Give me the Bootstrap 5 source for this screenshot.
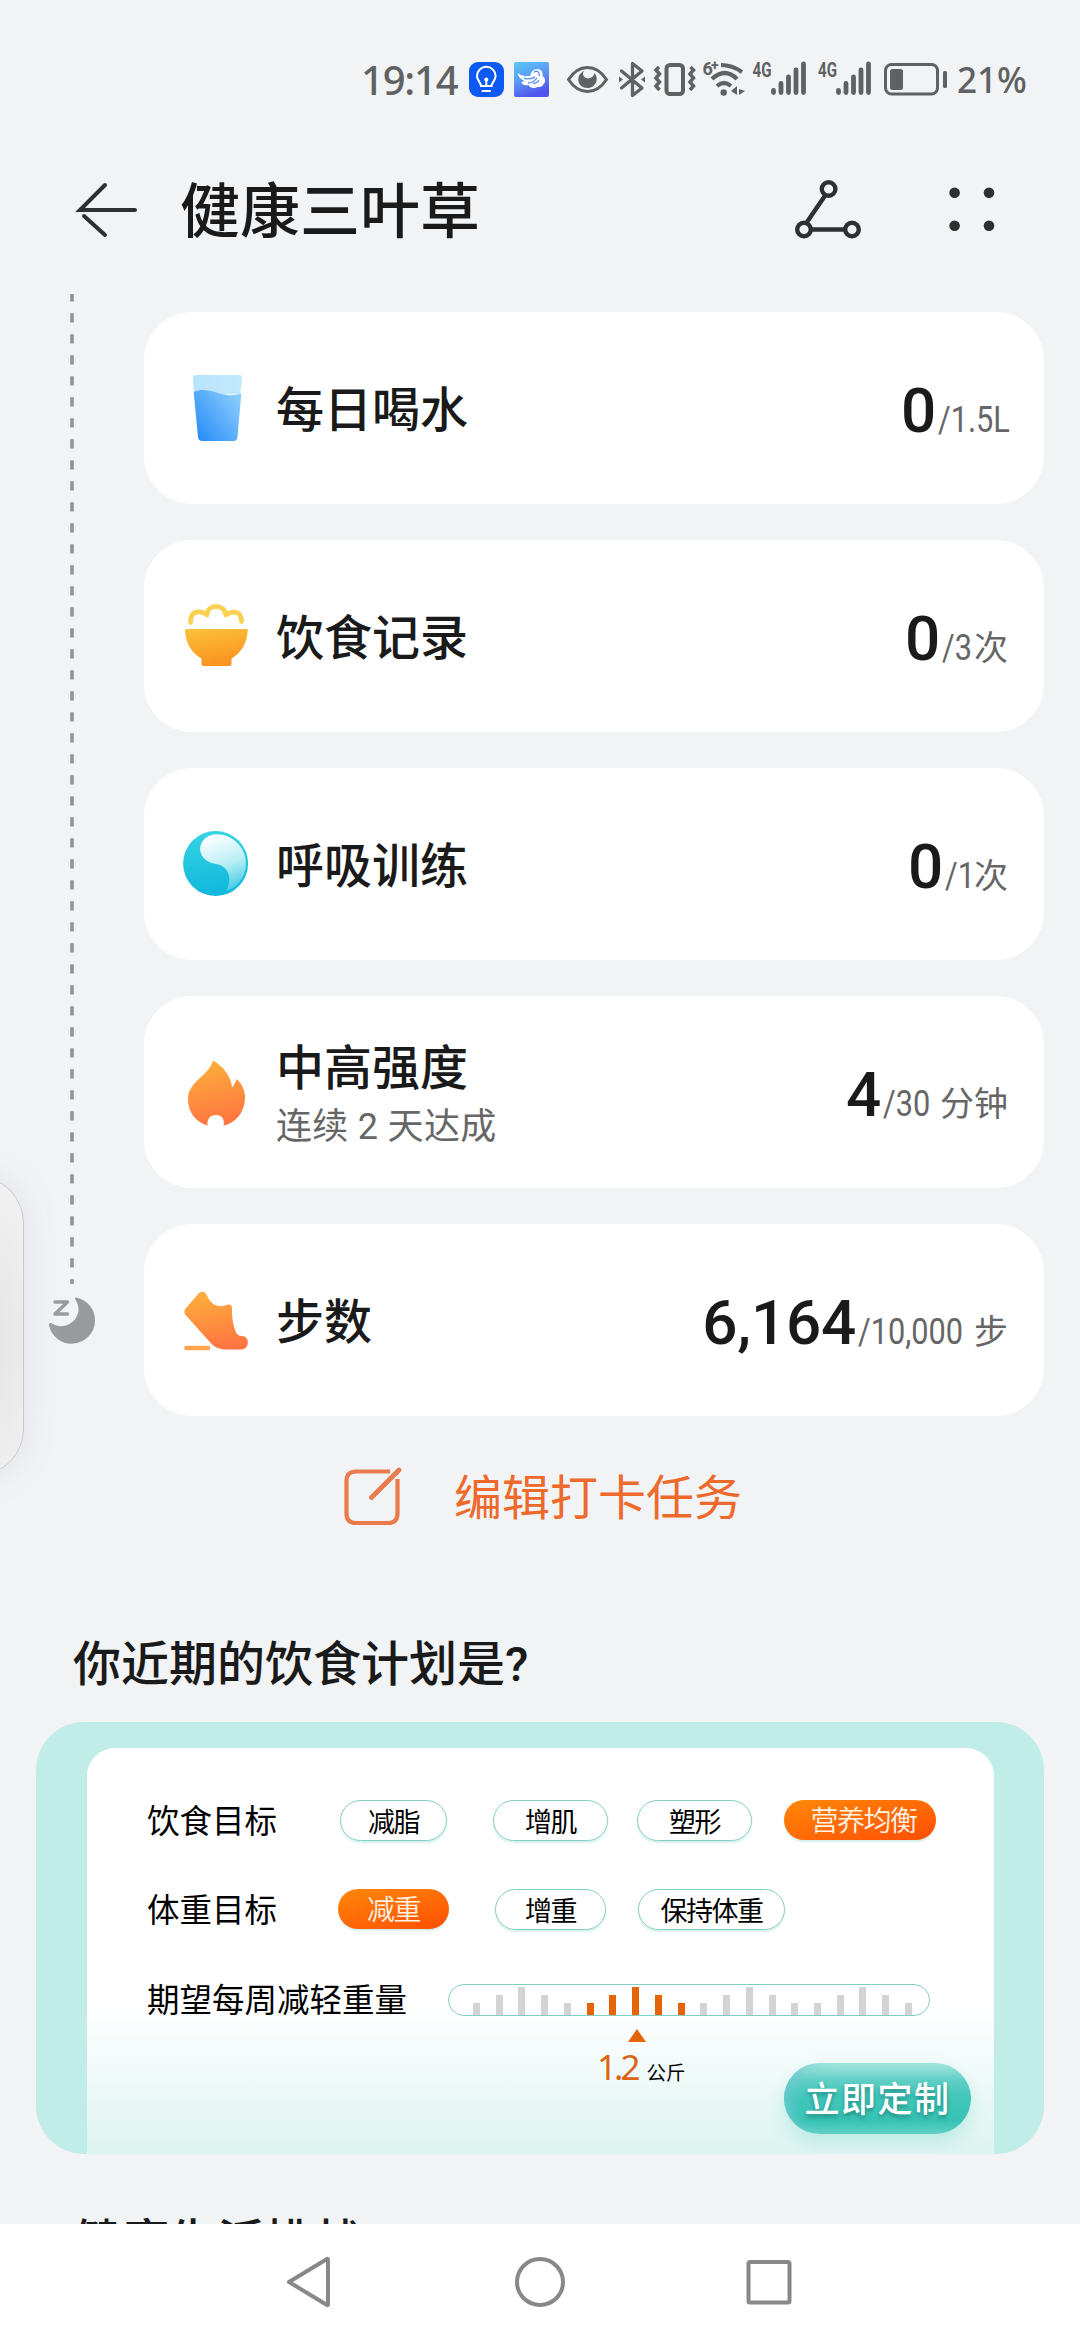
<!DOCTYPE html>
<html lang="zh-CN">
<head>
<meta charset="utf-8">
<meta name="viewport" content="width=device-width, initial-scale=1">
<title>健康三叶草</title>
<link href="https://cdn.jsdelivr.net/npm/bootstrap@5.3.0/dist/css/bootstrap.min.css" rel="stylesheet">
<style>
body{width:1080px;height:2340px;overflow:hidden;background:#f1f3f5;color:#1a1a1a;font-family:Roboto,"Noto Sans CJK SC",sans-serif;line-height:1}
svg{display:block;flex:none}
.status{height:120px;padding-left:361px;color:#606163}
.status-txt{font-family:"Noto Sans",sans-serif;font-size:40px;line-height:40px;white-space:nowrap;margin-top:60px;font-weight:500}
.clock{width:99px;letter-spacing:-1.2px}
.topbar{height:174px;padding:54px 0 0 72px}
.topbar h1{font-size:60px;line-height:72px;font-weight:500;width:646px;padding:3px 0 0 36px}
.viewport{height:1930px}
.rail{width:144px}
.tasks{width:900px;padding-top:18px;gap:36px}
.task{height:192px;border:0;border-radius:48px;padding:0 36px;background:#fff;color:#1a1a1a}
.task-name{font-size:48px;line-height:56px;font-weight:500;margin-left:24px;padding-top:6px}
.task-sub{font-size:36px;line-height:44px;font-weight:400;color:#666;margin-top:8px;letter-spacing:.3px}
.big{font-size:62px;font-weight:500;letter-spacing:-.2px;color:#1a1a1a}
.goal{font-size:37px;color:#666;font-weight:400;line-height:64px;padding-top:15px}
.squeeze{display:inline-block;transform:scaleX(.83);transform-origin:0 50%;white-space:nowrap;margin-left:2px}
.sq-l{width:70px}.sq-1{width:29px}.sq-2{width:32px}.sq-3{width:57px}.sq-4{width:116px}
.unit{font-size:34px;font-family:"Noto Sans CJK SC",sans-serif}
.edit{height:162px;padding-left:344px;color:#ee6a2c;gap:50px;font-size:48px}
.edit span{padding-top:4px}
.sec-title{font-size:48px;line-height:56px;font-weight:500;padding-left:73px}
.plan-title{padding-top:59px;height:144px}
.next-title{padding-top:61px}
.promo{width:1008px;height:432px;margin-left:36px;border-radius:48px;background:#c0ede7;padding:26px 50px 0 51px;overflow:hidden}
.sheet{height:406px;border-radius:28px 28px 0 0;background:linear-gradient(#fff 0,#fff 64%,#ddf4f1 100%);color:#000;font-family:"Noto Sans CJK SC",sans-serif;padding:52px 0 0 60px}
.line{height:42px;margin-bottom:47px}
.lbl{font-size:32.5px;line-height:42px;white-space:nowrap;width:193px;margin-top:-2px}
.lbl-long{width:301px}
.pill{height:41px;border:1.5px solid #84cdc4;border-radius:21px;font-size:27px;letter-spacing:-1.5px;line-height:39px;white-space:nowrap;box-shadow:0 2px 2px #d4f0ec;color:#000}
.pill.hot{border:0;color:#fff3e6;background:linear-gradient(165deg,#ff8208 10%,#ff4e04);height:40px;font-size:28px;font-weight:350}
.p-a{width:107px}.p-b{width:115px;margin-left:46px}.p-c{width:115px;margin-left:29px}.p-d{width:152px;margin-left:32px;padding-left:7px}
.q-a{width:111px;margin-left:-2px}.q-b{width:111px;margin-left:46px}.q-c{width:147px;margin-left:32px}
.ruler{width:482px;height:32px;border:1.5px solid #84cdc4;border-radius:16px;padding:0 17px 0 24px;background:#fff;margin-top:2px}
.ruler i{width:7px;background:#d3d3d3}.ruler i.on{background:#e66408}
.h1b{height:12px}.h2b{height:20px}.h3b{height:28px}
.kg{left:510px;top:281px}
.tip{margin-left:31px}
.kg-row{gap:9px;margin-top:7px}
.kg b{font-weight:400;font-size:35px;color:#dc6414;letter-spacing:-3px;font-family:"Noto Sans",sans-serif}
.kg span{font-size:19.500px}
.cta{right:23px;bottom:20px;width:187px;height:71px;border-radius:36px;color:#fff;font-size:35px;font-weight:500;letter-spacing:1.5px;line-height:68px;background:linear-gradient(#a8e6e0 0,#60cfc6 24%,#41c6ba 50%,#36c4b4 82%,#62cfc6 100%);box-shadow:inset 12px 0 14px -8px #70cbd2,0 10px 18px #bfebe5;text-shadow:0 3px 4px #238e84}
.navkeys{height:116px;background:#fff}
.drawer{left:-70px;top:1176px;width:94px;height:300px;border-radius:50px;border:1.5px solid #c9c9cb;background:radial-gradient(ellipse at 65% 55%,#e4e4e4,#f2f2f2 75%);box-shadow:0 0 36px #dfe2ea}
</style>
</head>
<body class="d-flex flex-column position-relative">

<header class="status d-flex align-items-start flex-shrink-0">
  <div class="status-txt clock">19:14</div>
  <svg width="600" height="80" viewBox="460 40 600 80" style="margin-top:40px">
    <defs>
      <linearGradient id="sky" x1="0" y1="0" x2=".4" y2="1"><stop offset="0" stop-color="#56c7f5"/><stop offset=".5" stop-color="#5b9df6"/><stop offset="1" stop-color="#5154ee"/></linearGradient>
    </defs>
    <rect x="469" y="62" width="35" height="35" rx="9" fill="#0d5af2"/>
    <g fill="none" stroke="#fff" stroke-width="2" stroke-linecap="round"><path d="M481 86c0-4-4-5-4-10a9.300 9.300 0 0 1 18.600 0c0 5-4 6-4 10zM482.500 91h7.500M486.300 79v6" /></g>
    <circle cx="486.300" cy="79.500" r="2" fill="#fff"/>
    <rect x="514" y="62" width="35" height="35" rx="2" fill="url(#sky)"/>
    <path d="M517.500 73c5 4 9 3 13 3 0-4 3-7 7-7 3 0 6 3 5 7 3 2 3.500 6 1 8-1 3-4 3-6 3-3 2-8 1-9-2-4 1-7-1-7-3 1-.5 2-.5 3-1-4-2-6-4-7-8z" fill="#fff"/>
    <path d="M524 78c4 2 7 1 11-1m-7 6c5 0 7-3 9-5M534 72c4-2 6 1 5 4m-6 7c2 1 5-1 6-3" fill="none" stroke="#5e93f3" stroke-width="1.400"/>
    <g fill="none" stroke="#606163" stroke-width="3">
      <path d="M568.500 79.500C579 63.500 596 63.500 606.500 79.500 596 95.500 579 95.500 568.500 79.500z"/>
      <path d="M621.500 71l20.500 17-9.500 7.500V63.500l9.500 7.500-20.500 17" stroke-linecap="round" stroke-linejoin="round" stroke-width="3.300"/>
      <rect x="666.500" y="65" width="16.500" height="29" rx="3.500" stroke-width="4"/>
      <path d="M659 67l-3 3 3.500 4-3.500 4 3.500 4-3.500 4 3.500 4M690.500 67l3 3-3.500 4 3.500 4-3.500 4 3.500 4-3.500 4" stroke-width="3.500"/>
    </g>
    <path d="M619 76.500l4 3-4 3zM645 76.500l-4 3 4 3zM584 71c-9 4-7 17 3.500 17 8 0 12-9 7-15-1 5-7 7-10 4-2-2-2-4-.5-6z" fill="#606163"/>
    <g fill="none" stroke="#606163" stroke-width="4.200">
      <path d="M721 65q11 0 21 7M712 79q13-12 25 0M717 86q7-6 14 0" />
    </g>
    <circle cx="723.700" cy="92.500" r="3.200" fill="#606163"/>
    <path d="M731 91l6-5v9zM739 89v6l6-4z" fill="#606163"/>
    <g fill="#606163" font-family="Roboto, sans-serif" font-weight="700">
      <text x="702.500" y="75" font-size="18">6</text><text x="711" y="70" font-size="14">+</text>
      <text x="752.500" y="77" font-size="20.500" textLength="19" lengthAdjust="spacingAndGlyphs">4G</text>
      <text x="818" y="77" font-size="20.500" textLength="19" lengthAdjust="spacingAndGlyphs">4G</text>
    </g>
    <g stroke="#606163" stroke-width="4.800" stroke-linecap="round">
      <path d="M773.500 90.500v2M781 83.500v9M788.500 77v15.500M796 70v22.500M803.500 64v28.500M838.500 90.500v2M846 83.500v9M853.500 77v15.500M861 70v22.500M868.500 64v28.500"/>
    </g>
    <rect x="885.500" y="64.500" width="52" height="29.500" rx="6" fill="none" stroke="#606163" stroke-width="3"/>
    <rect x="890" y="69" width="13" height="21" rx="2.500" fill="#606163"/>
    <rect x="943" y="71" width="4" height="17" rx="1.500" fill="#606163"/>
    <text x="957" y="93" font-family="Noto Sans, sans-serif" font-size="37" font-weight="500" fill="#606163" textLength="70" lengthAdjust="spacingAndGlyphs">21%</text>
  </svg>
</header>

<nav class="topbar d-flex align-items-start flex-shrink-0">
  <svg width="72" height="72" viewBox="72 174 72 72" fill="none" stroke="#2e2f30" stroke-width="4" stroke-linecap="round"><path d="M135 210H80L105 185M84 216l21 19"/></svg>
  <h1 class="mb-0">健康三叶草</h1>
  <svg width="270" height="72" viewBox="790 174 270 72">
    <g fill="none" stroke="#2e2f30" stroke-width="4.400"><path d="M825.500 195L807 222M811 229.500h34"/><circle cx="828.600" cy="189" r="6.800"/><circle cx="804" cy="229.500" r="6.800"/><circle cx="852" cy="229.500" r="6.800"/></g>
    <g fill="#2e2f30"><circle cx="954.600" cy="192.700" r="5.300"/><circle cx="989" cy="192.700" r="5.300"/><circle cx="954.600" cy="225.700" r="5.300"/><circle cx="989" cy="225.700" r="5.300"/></g>
  </svg>
</nav>

<main class="viewport overflow-hidden flex-shrink-0">
  <div class="d-flex">
    <div class="rail">
      <svg width="144" height="1060" viewBox="0 294 144 1060">
        <path d="M72 294V1284" stroke="#929395" stroke-width="3.600" stroke-dasharray="9.300 11.700" stroke-dashoffset="1.700"/>
        <path d="M76 1297.500a23.300 23.300 0 1 1-27 28c-.5-2 1.500-3 3-2 14 9 32-6 25-21-1.500-3-3-5-1-5z" fill="#999a9c"/>
        <path d="M55 1302h12.500L55 1314h12.500" fill="none" stroke="#999a9c" stroke-width="3.400" stroke-linecap="round" stroke-linejoin="round"/>
      </svg>
    </div>
    <div class="tasks d-flex flex-column">
      <section class="task card flex-row align-items-center">
        <svg width="72" height="72" viewBox="180 372 72 72">
          <defs><linearGradient id="w1" x1="0" y1="1" x2="1" y2=".2"><stop offset="0" stop-color="#2088f5"/><stop offset="1" stop-color="#8accff"/></linearGradient><linearGradient id="w2"><stop offset="0" stop-color="#b9e3fd"/><stop offset="1" stop-color="#c2eafd"/></linearGradient></defs>
          <path d="M196 375h43q3.500 0 3.300 3.500L240 394h-46l-1-15.500q-.2-3.500 3-3.500z" fill="url(#w2)"/>
          <path d="M193.700 392c17-7 27 8 47.600 1.500L237.500 437q-.5 4-4 4h-31q-4 0-4.500-4z" fill="url(#w1)"/>
        </svg>
        <div class="task-name">每日喝水</div>
        <div class="ms-auto goal"><span class="big">0</span><span class="squeeze sq-l">/1.5L</span></div>
      </section>
      <section class="task card flex-row align-items-center">
        <svg width="72" height="72" viewBox="180 600 72 72">
          <defs><linearGradient id="bo" x1="0" y1="0" x2=".3" y2="1"><stop offset="0" stop-color="#fcc23b"/><stop offset="1" stop-color="#fa9420"/></linearGradient></defs>
          <path d="M190.500 622.500C190 610 201 610 207 615c0-11 17-12 19 0 6-5 16-4 15.500 6.500" fill="none" stroke="#f9d150" stroke-width="4.800" stroke-linecap="round" stroke-linejoin="round"/>
          <path d="M186.500 629h60q1.500 0 1.200 2c-1 14-8 23-16.200 27.500v5.500q0 2-2 2h-26q-2 0-2-2v-5.500C193 654 186 645 185 631q0-2 1.500-2z" fill="url(#bo)"/>
        </svg>
        <div class="task-name">饮食记录</div>
        <div class="ms-auto goal"><span class="big">0</span><span class="squeeze sq-2">/3</span><span class="unit">次</span></div>
      </section>
      <section class="task card flex-row align-items-center">
        <svg width="72" height="72" viewBox="180 828 72 72">
          <defs><linearGradient id="br" x1=".5" y1="0" x2=".6" y2="1"><stop offset="0" stop-color="#35d3e2"/><stop offset="1" stop-color="#0fb7dc"/></linearGradient><linearGradient id="bs" x1=".3" y1="0" x2=".6" y2="1"><stop offset="0" stop-color="#fff"/><stop offset=".55" stop-color="#b9eff6"/><stop offset="1" stop-color="#45cce3"/></linearGradient></defs>
          <circle cx="215.600" cy="863.500" r="32.500" fill="url(#br)"/>
          <path d="M213 834.500c18-2 33 12 33 29 0 14-9 24-20 27.500 7-12 3-25-10-27-21-3-20-26-3-29.500z" fill="url(#bs)"/>
        </svg>
        <div class="task-name">呼吸训练</div>
        <div class="ms-auto goal"><span class="big">0</span><span class="squeeze sq-1">/1</span><span class="unit">次</span></div>
      </section>
      <section class="task card flex-row align-items-center">
        <svg width="72" height="72" viewBox="180 1056 72 72">
          <defs><linearGradient id="fl" x1=".4" y1="0" x2=".6" y2="1"><stop offset="0" stop-color="#fdae3c"/><stop offset="1" stop-color="#ff7441"/></linearGradient></defs>
          <path d="M213 1060.500c9 5 18 15 19 27 2-2 4-6 4.500-8.500 5 4 8.500 11 8.500 18 0 15-9 26-21.500 28.500 1.500-6-1.500-10.500-7.500-10.500s-9 4-8.500 10.500C196 1122 188 1113 188 1099c0-18 20-22 25-38.500z" fill="url(#fl)"/>
        </svg>
        <div class="task-name">中高强度<div class="task-sub">连续 2 天达成</div></div>
        <div class="ms-auto goal"><span class="big">4</span><span class="squeeze sq-3">/30</span><span class="unit">分钟</span></div>
      </section>
      <section class="task card flex-row align-items-center">
        <svg width="72" height="72" viewBox="180 1284 72 72">
          <path d="M199 1293q5-3 7.500 1.500c4 11 13 13.500 20 10.500 4-1.500 5.500 0 5.500 4 0 11 1.500 19 5 25q1.500 2 5 2c8 0 8 13.500-1 13.500h-15q-8 0-14-5l-26-29q-3.500-3.500 0-7.500 6-7 13-15z" fill="url(#fl)"/>
          <path d="M186.500 1348h21.500" stroke="#fca54d" stroke-width="4.600" stroke-linecap="round"/>
        </svg>
        <div class="task-name">步数</div>
        <div class="ms-auto goal"><span class="big">6,164</span><span class="squeeze sq-4">/10,000</span><span class="unit">步</span></div>
      </section>
    </div>
  </div>

  <div class="edit d-flex align-items-center">
    <svg width="60" height="60" viewBox="344 1467 60 60" fill="none" stroke="#ea7b4c" stroke-width="4.200"><path d="M390 1471.500H356q-9.500 0-9.500 9.500v32.500q0 9.500 9.500 9.500h32q9.500 0 9.500-9.500V1479"/><path d="M399 1470l-27.500 27.500" stroke-linecap="round" stroke-width="4.800"/></svg>
    <span>编辑打卡任务</span>
  </div>

  <h2 class="sec-title plan-title mb-0">你近期的饮食计划是?</h2>

  <section class="promo">
    <div class="sheet position-relative">
      <div class="line d-flex">
        <div class="lbl">饮食目标</div>
        <div class="d-flex">
          <div class="pill text-center p-a">减脂</div><div class="pill text-center p-b">增肌</div><div class="pill text-center p-c">塑形</div><div class="pill hot text-center p-d">营养均衡</div>
        </div>
      </div>
      <div class="line d-flex">
        <div class="lbl">体重目标</div>
        <div class="d-flex">
          <div class="pill hot text-center q-a">减重</div><div class="pill text-center q-b">增重</div><div class="pill text-center q-c">保持体重</div>
        </div>
      </div>
      <div class="line d-flex align-items-center">
        <div class="lbl lbl-long">期望每周减轻重量</div>
        <div class="ruler d-flex align-items-end justify-content-between">
          <i class="h1b"></i><i class="h2b"></i><i class="h3b"></i><i class="h2b"></i><i class="h1b"></i>
          <i class="h1b on"></i><i class="h2b on"></i><i class="h3b on"></i><i class="h2b on"></i><i class="h1b on"></i>
          <i class="h1b"></i><i class="h2b"></i><i class="h3b"></i><i class="h2b"></i><i class="h1b"></i>
          <i class="h1b"></i><i class="h2b"></i><i class="h3b"></i><i class="h2b"></i><i class="h1b"></i>
        </div>
      </div>
      <div class="kg position-absolute">
        <svg width="18" height="13" viewBox="0 0 18 13" class="tip"><path d="M9 0l9 13H0z" fill="#e66408"/></svg>
        <div class="d-flex align-items-baseline kg-row"><b>1.2</b><span>公斤</span></div>
      </div>
      <div class="cta position-absolute text-center">立即定制</div>
    </div>
  </section>

  <h2 class="sec-title next-title mb-0">健康生活挑战</h2>
</main>

<footer class="navkeys flex-shrink-0 d-flex justify-content-center align-items-center">
  <svg width="540" height="60" viewBox="270 2252 540 60" fill="none" stroke="#888" stroke-width="4" stroke-linejoin="round"><path d="M289 2282l38-23q1-.5 1 1v44q0 1.500-1 1z"/><circle cx="540" cy="2282" r="23"/><rect x="748.500" y="2262" width="41" height="40.500" rx="1.500"/></svg>
</footer>

<div class="drawer position-absolute"></div>

<script src="https://cdn.jsdelivr.net/npm/bootstrap@5.3.0/dist/js/bootstrap.bundle.min.js"></script>
</body>
</html>
